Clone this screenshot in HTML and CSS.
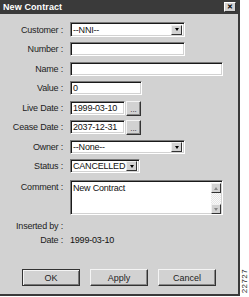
FILE: index.html
```html
<!DOCTYPE html>
<html>
<head>
<meta charset="utf-8">
<link rel="stylesheet" href="styles.css">
</head>
<body>
<div class="page">
  <div class="window">
    <div class="titlebar">
      <span class="title">New Contract</span>
      <span class="close">&#x2715;</span>
    </div>
    <div class="form">
      <div class="row r-customer">
        <span class="label">Customer :</span>
        <div class="field select w-114"><span class="val">--NNI--</span><span class="drop"><span class="tri"></span></span></div>
      </div>
      <div class="row r-number">
        <span class="label">Number :</span>
        <div class="field w-114"></div>
      </div>
      <div class="row r-name">
        <span class="label">Name :</span>
        <div class="field w-152"></div>
      </div>
      <div class="row r-value">
        <span class="label">Value :</span>
        <div class="field w-71"><span class="val">0</span></div>
      </div>
      <div class="row r-live">
        <span class="label">Live Date :</span>
        <div class="field w-54"><span class="val">1999-03-10</span></div>
        <span class="dots">...</span>
      </div>
      <div class="row r-cease">
        <span class="label">Cease Date :</span>
        <div class="field w-54"><span class="val">2037-12-31</span></div>
        <span class="dots">...</span>
      </div>
      <div class="row r-owner">
        <span class="label">Owner :</span>
        <div class="field select w-114"><span class="val">--None--</span><span class="drop"><span class="tri"></span></span></div>
      </div>
      <div class="row r-status">
        <span class="label">Status :</span>
        <div class="field select w-69"><span class="val">CANCELLED</span><span class="drop"><span class="tri"></span></span></div>
      </div>
      <div class="row top r-comment">
        <span class="label">Comment :</span>
        <div class="field area w-152">
          <span class="val">New Contract</span>
          <span class="scroll">
            <span class="sbtn"><span class="utri"></span></span>
            <span class="track"></span>
            <span class="sbtn"><span class="tri"></span></span>
          </span>
        </div>
      </div>
      <div class="row text r-inserted">
        <span class="label">Inserted by :</span>
      </div>
      <div class="row text r-date">
        <span class="label">Date :</span>
        <span class="plain">1999-03-10</span>
      </div>
      <div class="buttons">
        <span class="btn default">OK</span>
        <span class="btn">Apply</span>
        <span class="btn">Cancel</span>
      </div>
    </div>
  </div>
  <div class="side"><span class="code">22727</span></div>
</div>
</body>
</html>
```

FILE: styles.css
```css
* { box-sizing: border-box; }
html, body { margin: 0; padding: 0; background: #fff; }
body {
  width: 249px;
  height: 297px;
  overflow: hidden;
  font-family: "Liberation Sans", Arial, sans-serif;
  font-size: 8px;
  color: #111;
}
.page { display: flex; height: 297px; }
.window {
  width: 242px;
  height: 296px;
  background: #d2d2d2;
  border-right: 2px solid #3a3a3a;
  border-bottom: 2px solid #3a3a3a;
  display: flex;
  flex-direction: column;
}
.titlebar {
  height: 14px;
  background: #3a3a3a;
  display: flex;
  align-items: center;
  justify-content: space-between;
  padding: 0 2px 0 3px;
}
.title {
  color: #fff;
  font-weight: bold;
  font-size: 9px;
  letter-spacing: 0.1px;
}
.close {
  width: 12px;
  height: 10px;
  background: #d2d2d2;
  border: 1px solid;
  border-color: #fff #333 #333 #fff;
  font-size: 7px;
  font-weight: bold;
  line-height: 8px;
  text-align: center;
  color: #000;
}
.form { display: flex; flex-direction: column; }
.row { display: flex; align-items: center; height: 14px; }
.row.top { align-items: flex-start; height: 35px; }
.row.text { height: 11px; }
.label {
  width: 63px;
  text-align: right;
  margin-right: 7px;
  color: #222;
  white-space: nowrap;
  font-size: 9px;
  letter-spacing: -0.2px;
}
.row.top .label { margin-top: 2px; }
.r-customer { margin-top: 8px; height: 15px; }
.r-number { margin-top: 5px; }
.r-name { margin-top: 6px; }
.r-value { margin-top: 5px; }
.r-live { margin-top: 6px; }
.r-cease { margin-top: 5px; }
.r-owner { margin-top: 6px; }
.r-status { margin-top: 5px; }
.r-comment { margin-top: 7px; }
.r-inserted { margin-top: 5px; }
.r-date { margin-top: 3px; }
.field {
  height: 14px;
  background: #fff;
  border: 1px solid;
  border-color: #7a7a7a #fff #fff #7a7a7a;
  box-shadow: inset 1px 1px 0 #1a1a1a, inset -1px -1px 0 #d2d2d2;
  display: flex;
  align-items: center;
  padding-left: 2px;
  position: relative;
  font-size: 9px;
}
.r-customer .field { height: 15px; }
.val { white-space: nowrap; line-height: 10px; letter-spacing: -0.2px; }
.w-114 { width: 115px; }
.w-152 { width: 153px; }
.w-71 { width: 72px; }
.w-54 { width: 55px; }
.w-69 { width: 70px; }
.select { justify-content: space-between; padding-right: 2px; }
.drop {
  width: 11px;
  height: 10px;
  background: #d2d2d2;
  border: 1px solid;
  border-color: #f0f0f0 #333 #333 #f0f0f0;
  display: flex;
  align-items: center;
  justify-content: center;
}
.tri {
  width: 0; height: 0;
  border-left: 2.5px solid transparent;
  border-right: 2.5px solid transparent;
  border-top: 3px solid #000;
}
.utri {
  width: 0; height: 0;
  border-left: 2.5px solid transparent;
  border-right: 2.5px solid transparent;
  border-bottom: 3px solid #888;
}
.dots {
  width: 15px;
  height: 15px;
  margin-left: 1px;
  background: #d2d2d2;
  border: 1px solid;
  border-color: #f4f4f4 #333 #333 #f4f4f4;
  box-shadow: inset -1px -1px 0 #888;
  font-size: 8px;
  line-height: 16px;
  text-align: center;
  color: #222;
}
.area {
  height: 35px;
  align-items: flex-start;
  justify-content: space-between;
  padding: 2px 1px 2px 2px;
}
.scroll {
  width: 10px;
  height: 31px;
  display: flex;
  flex-direction: column;
}
.sbtn {
  height: 10px;
  background: #d2d2d2;
  border: 1px solid;
  border-color: #f0f0f0 #333 #333 #f0f0f0;
  display: flex;
  align-items: center;
  justify-content: center;
}
.sbtn .tri { border-top-color: #888; }
.track {
  flex: 1;
  background: repeating-conic-gradient(#e6e6e6 0 25%, #fafafa 0 50%) 0 0 / 2px 2px;
}
.plain { white-space: nowrap; font-size: 9px; letter-spacing: -0.2px; }
.buttons {
  display: flex;
  gap: 10px;
  padding-left: 22px;
  margin-top: 24px;
}
.btn {
  width: 58px;
  height: 17px;
  background: #d2d2d2;
  border: 1px solid;
  border-color: #f4f4f4 #333 #333 #f4f4f4;
  box-shadow: inset -1px -1px 0 #888;
  display: flex;
  align-items: center;
  justify-content: center;
  font-size: 9px;
  color: #222;
}
.btn.default {
  border-color: #333;
  box-shadow: inset 1px 1px 0 #f4f4f4, inset -1px -1px 0 #777;
}
.side {
  flex: 1;
  display: flex;
  align-items: flex-end;
  justify-content: center;
  padding-bottom: 4px;
}
.code {
  writing-mode: vertical-rl;
  transform: rotate(180deg);
  font-size: 8px;
  color: #222;
  letter-spacing: 0.4px;
}
```
